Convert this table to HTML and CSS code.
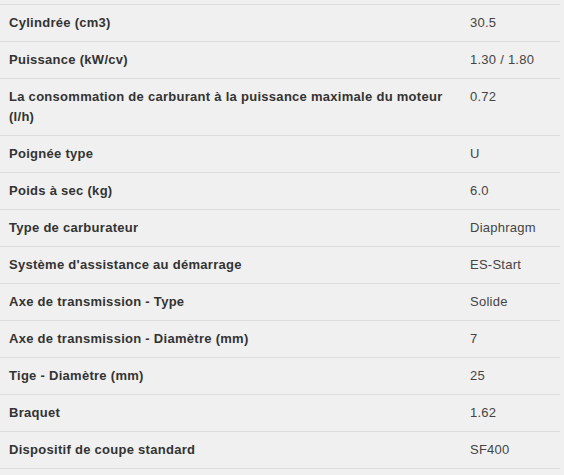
FILE: index.html
```html
<!DOCTYPE html>
<html lang="fr">
<head>
<meta charset="utf-8">
<link rel="stylesheet" href="styles.css">
</head>
<body>
<div class="specs">
  <div class="row"><div class="label">Cylindrée (cm3)</div><div class="value">30.5</div></div>
  <div class="row"><div class="label">Puissance (kW/cv)</div><div class="value">1.30 / 1.80</div></div>
  <div class="row"><div class="label">La consommation de carburant à la puissance maximale du moteur (l/h)</div><div class="value">0.72</div></div>
  <div class="row"><div class="label">Poignée type</div><div class="value">U</div></div>
  <div class="row"><div class="label">Poids à sec (kg)</div><div class="value">6.0</div></div>
  <div class="row"><div class="label">Type de carburateur</div><div class="value">Diaphragm</div></div>
  <div class="row"><div class="label">Système d'assistance au démarrage</div><div class="value">ES-Start</div></div>
  <div class="row"><div class="label">Axe de transmission - Type</div><div class="value">Solide</div></div>
  <div class="row"><div class="label">Axe de transmission - Diamètre (mm)</div><div class="value">7</div></div>
  <div class="row"><div class="label">Tige - Diamètre (mm)</div><div class="value">25</div></div>
  <div class="row"><div class="label">Braquet</div><div class="value">1.62</div></div>
  <div class="row"><div class="label">Dispositif de coupe standard</div><div class="value">SF400</div></div>
</div>
</body>
</html>
```
FILE: styles.css
```css
html, body {
  margin: 0;
  background: #f0f0f0;
}
body {
  padding-top: 4px;
  font-family: "Liberation Sans", Arial, sans-serif;
  font-size: 13px;
  line-height: 20px;
  color: #333;
}
.specs {
  width: 560px;
  border-bottom: 1px solid #dcdcdc;
}
.row {
  display: grid;
  grid-template-columns: 461px 99px;
  border-top: 1px solid #dcdcdc;
}
.label, .value {
  padding: 8px 9px;
}
.label {
  font-weight: bold;
  color: #333;
  letter-spacing: 0.28px;
}
.value {
  color: #444;
  letter-spacing: 0.25px;
}
```
